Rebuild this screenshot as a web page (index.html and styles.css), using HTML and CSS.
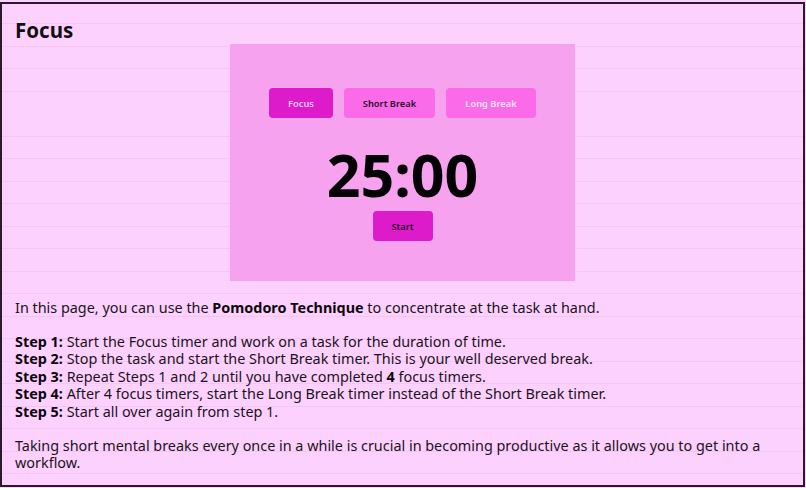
FILE: index.html
```html
<!DOCTYPE html>
<html lang="en">
<head>
<meta charset="utf-8">
<title>Focus</title>
<link rel="stylesheet" href="styles.css">
</head>
<body>
<main class="page">
  <h1 class="title">Focus</h1>
  <section class="timer-card">
    <div class="modes">
      <button class="mode mode-active">Focus</button>
      <button class="mode mode-short">Short Break</button>
      <button class="mode mode-long">Long Break</button>
    </div>
    <div class="clock">25:00</div>
    <button class="start">Start</button>
  </section>
  <p class="text text-intro">In this page, you can use the <b>Pomodoro Technique</b> to concentrate at the task at hand.</p>
  <p class="text">
    <b>Step 1:</b> Start the Focus timer and work on a task for the duration of time.<br>
    <b>Step 2:</b> Stop the task and start the Short Break timer. This is your well deserved break.<br>
    <b>Step 3:</b> Repeat Steps 1 and 2 until you have completed <b>4</b> focus timers.<br>
    <b>Step 4:</b> After 4 focus timers, start the Long Break timer instead of the Short Break timer.<br>
    <b>Step 5:</b> Start all over again from step 1.
  </p>
  <p class="text">Taking short mental breaks every once in a while is crucial in becoming productive as it allows you to get into a workflow.</p>
</main>
</body>
</html>
```
FILE: styles.css
```css
html, body {
  margin: 0;
  padding: 0;
}
body {
  background: #fdd1fd;
  padding-top: 2px;
  font-family: "Noto Sans", "Open Sans", sans-serif;
  color: #171117;
}
.page {
  box-sizing: border-box;
  width: 805px;
  height: 485px;
  border: 2px solid #2a1b2a;
  padding: 0 13px;
  overflow: hidden;
  background-color: #fdd1fd;
  background-image: repeating-linear-gradient(to bottom, transparent 0, transparent 21.5px, #f5c5f3 21.5px, #f5c5f3 22.5px);
  background-position: 0 -2px;
}
.title {
  margin: 14px 0 2px;
  font-size: 20.5px;
  line-height: 24px;
  font-weight: 700;
  color: #111;
}
.timer-card {
  width: 345px;
  height: 237px;
  box-sizing: border-box;
  margin: 0 auto;
  padding-top: 44px;
  background: #f7a2ee;
  display: flex;
  flex-direction: column;
  align-items: center;
}
.modes {
  display: flex;
  gap: 11px;
}
.mode, .start {
  border: none;
  border-radius: 4px;
  height: 30px;
  font-family: "Noto Sans", sans-serif;
  font-size: 9.3px;
  font-weight: 600;
  padding: 0;
  cursor: pointer;
}
.mode-active {
  width: 64px;
  background: #dd1bca;
  color: #fbc6f4;
}
.mode-short {
  width: 91px;
  background: #fb6be9;
  color: #2d0f28;
}
.mode-long {
  width: 90px;
  background: #fb6be9;
  color: #fde0f8;
}
.clock {
  margin-top: 27px;
  font-size: 59px;
  line-height: 59px;
  font-weight: 700;
  color: #050205;
}
.start {
  margin-top: 7px;
  width: 60px;
  background: #dd1bca;
  color: #2d0a28;
}
.text {
  margin: 16px 0 0;
  font-size: 14.4px;
  line-height: 17.6px;
  color: #1c141c;
}
.text-intro {
  margin-top: 18px;
}
.text b {
  font-weight: 700;
  color: #0d080d;
}
```
